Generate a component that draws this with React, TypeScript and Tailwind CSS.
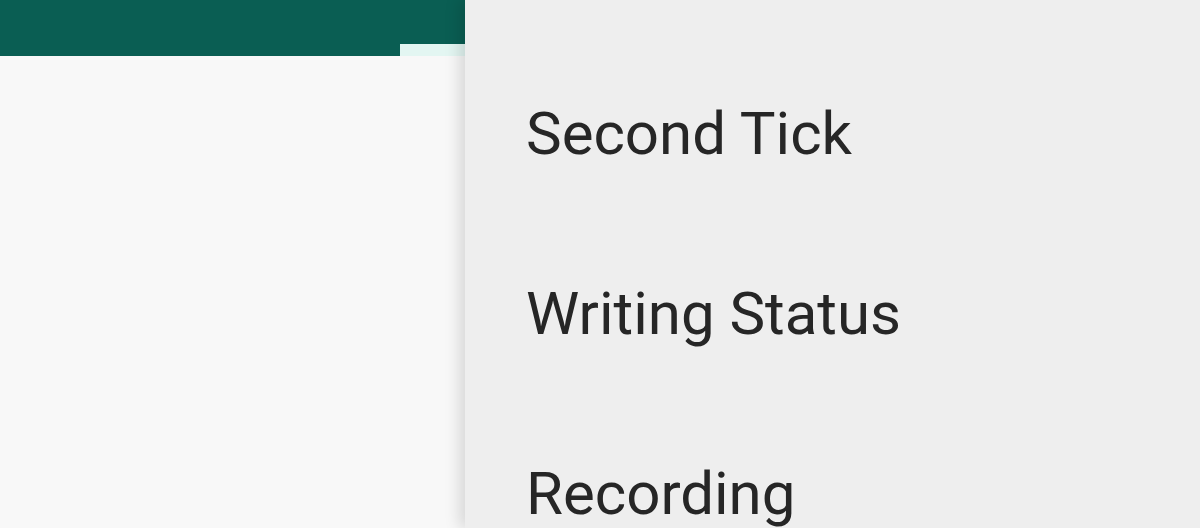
import React from "react";

export default function App() {
  const items = ["Second Tick", "Writing Status", "Recording"];
  return (
    <div
      className="relative w-[1200px] h-[528px] overflow-hidden bg-[#f8f8f8]"
      style={{ fontFamily: "Roboto, 'Noto Sans', sans-serif" }}
    >
      <div className="flex flex-col h-full">
        <div className="h-[56px] bg-[#0a5e53] flex items-end shadow-[0_2px_4px_rgba(0,0,0,0.12)]">
          <div className="w-[400px]" />
          <div className="w-[120px] h-[12px] bg-[#e3f6f2]" />
        </div>
        <div className="flex-1 bg-[#f8f8f8]" />
      </div>
      <div className="absolute top-0 bottom-0 left-[465px] right-0 bg-[#eeeeee] shadow-[-6px_0_14px_rgba(0,0,0,0.13)] pt-[44px] pl-[61px]">
        {items.map((t) => (
          <div
            key={t}
            className="h-[180px] leading-[180px] text-[60px] text-[#262626] whitespace-nowrap"
          >
            {t}
          </div>
        ))}
      </div>
    </div>
  );
}
